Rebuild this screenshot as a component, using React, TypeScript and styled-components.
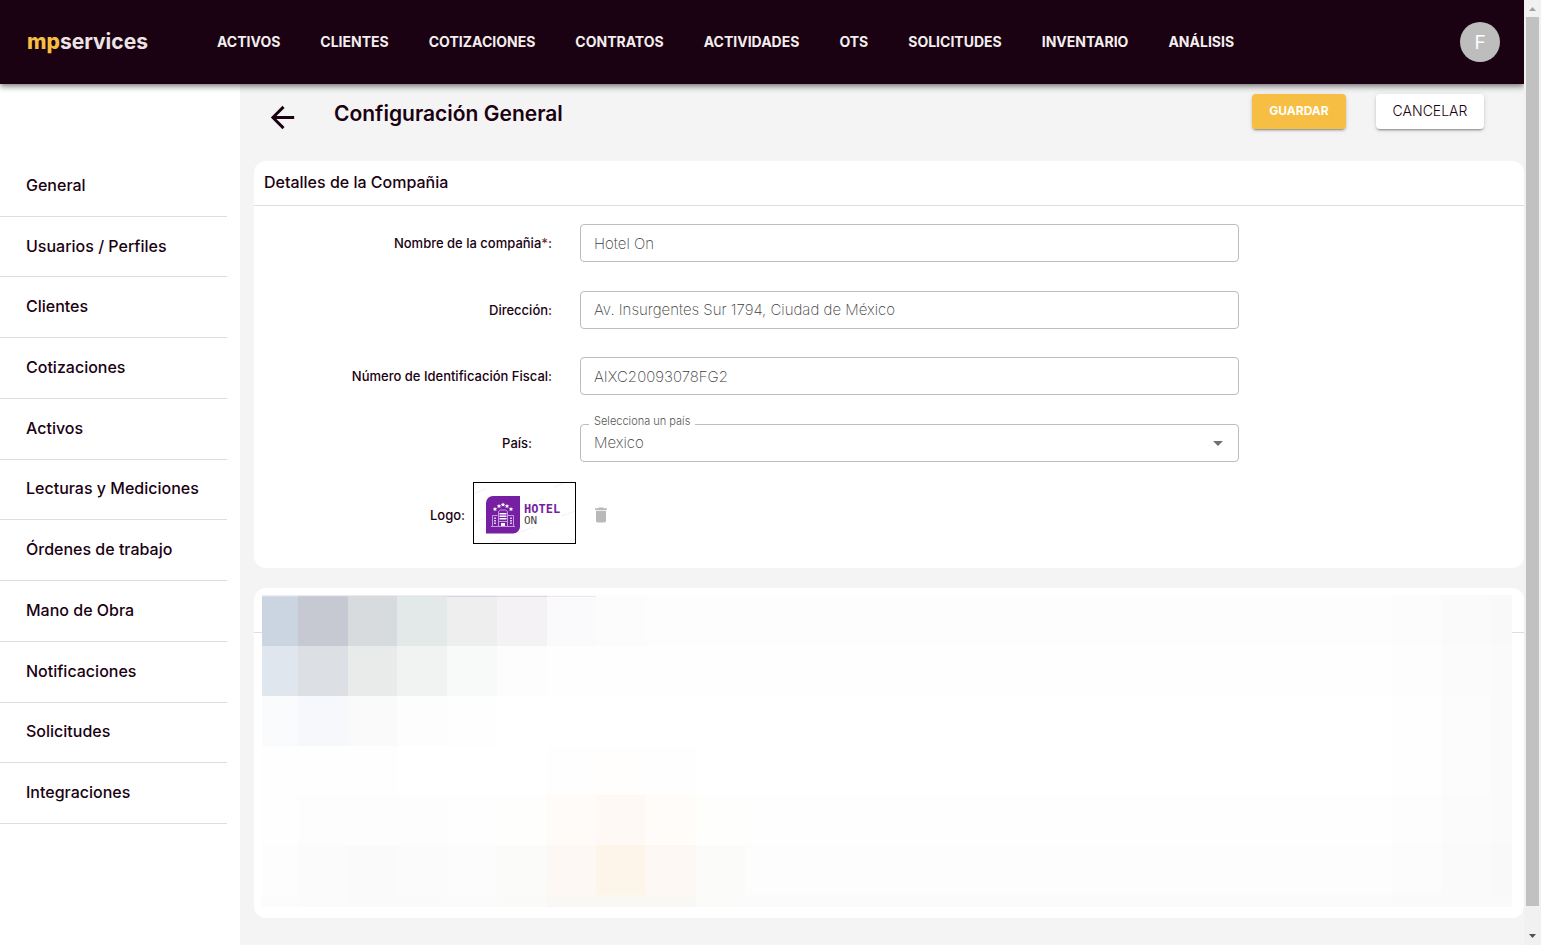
import React from "react";
import styled, { createGlobalStyle } from "styled-components";

const ink = "#1a0212";

const GlobalStyle = createGlobalStyle`
  * { box-sizing: border-box; }
  body {
    margin: 0;
    background: #f4f4f4;
    color: ${ink};
    font-family: Inter, "Noto Sans", sans-serif;
    font-size: 15px;
  }
  button, input, select { font-family: inherit; }
`;

const Frame = styled.div`
  display: grid;
  grid-template-columns: minmax(0, 1fr) 17px;
  min-height: 100vh;
`;

const Page = styled.div`
  display: flex;
  flex-direction: column;
  overflow: hidden;
`;

const Header = styled.header`
  position: relative;
  z-index: 2;
  display: flex;
  align-items: center;
  height: 84px;
  padding: 0 24px 0 27px;
  background: ${ink};
  box-shadow: 0 2px 4px -1px rgba(0, 0, 0, 0.3), 0 4px 5px rgba(0, 0, 0, 0.2),
    0 1px 10px rgba(0, 0, 0, 0.14);
`;

const Brand = styled.a`
  width: 190px;
  padding-bottom: 2px;
  color: #ece4e4;
  font-size: 21px;
  font-weight: 700;
  text-decoration: none;
`;

const BrandAccent = styled.span`
  color: #f6be42;
  font-weight: 800;
`;

const Nav = styled.nav`
  display: flex;
  flex: 1;
  gap: 40px;
  padding-bottom: 2px;
`;

const NavLink = styled.a`
  color: #f4eeee;
  font-size: 14px;
  font-weight: 700;
  text-decoration: none;
`;

const Avatar = styled.button`
  width: 40px;
  height: 40px;
  padding: 0;
  border: 0;
  border-radius: 50%;
  background: #bdbdbd;
  color: #fff;
  font-size: 19px;
`;

const Body = styled.div`
  display: flex;
  flex: 1;
`;

const Sidebar = styled.aside`
  flex: 0 0 240px;
  padding: 72px 13px 0 0;
  background: #fff;
`;

const Menu = styled.ul`
  display: grid;
  grid-auto-rows: 1fr;
  height: 668px;
  margin: 0;
  padding: 0;
  list-style: none;
`;

const MenuItem = styled.li`
  display: flex;
  align-items: center;
  padding-bottom: 2px;
  border-bottom: 1px solid #dedede;
`;

const MenuLink = styled.a`
  padding-left: 26px;
  color: ${ink};
  font-size: 16px;
  font-weight: 500;
  text-decoration: none;
`;

const Main = styled.main`
  flex: 1;
  min-width: 0;
  padding: 0 0 27px 14px;
`;

const TitleBar = styled.div`
  display: flex;
  align-items: flex-start;
  height: 77px;
  padding: 10px 40px 0 11px;
`;

const IconButton = styled.button`
  display: flex;
  padding: 0;
  border: 0;
  background: none;
  color: inherit;
`;

const BackButton = styled(IconButton)`
  padding-top: 6px;
`;

const Title = styled.h1`
  flex: 1;
  margin: 0 0 0 34px;
  font-size: 21px;
  font-weight: 600;
  line-height: 40px;
`;

const Action = styled.button<{ $primary?: boolean }>`
  width: ${(p) => (p.$primary ? 94 : 108)}px;
  height: 35px;
  margin-left: 30px;
  padding: 0 0 2px;
  border: 0;
  border-radius: 4px;
  background: ${(p) => (p.$primary ? "#f6be42" : "#fff")};
  color: ${(p) => (p.$primary ? "#fff" : ink)};
  font-size: ${(p) => (p.$primary ? 12 : 14)}px;
  font-weight: ${(p) => (p.$primary ? 700 : 300)};
  box-shadow: 0 3px 1px -2px rgba(0, 0, 0, 0.2), 0 2px 2px rgba(0, 0, 0, 0.14),
    0 1px 5px rgba(0, 0, 0, 0.12);
`;

const Card = styled.section`
  position: relative;
  border-radius: 12px;
  background: #fff;
  & + & {
    height: 330px;
    margin-top: 20px;
  }
`;

const CardHeader = styled.h2`
  height: 45px;
  margin: 0;
  padding: 0 10px;
  border-bottom: 1px solid #dedede;
  font-size: 16px;
  font-weight: 500;
  line-height: 42px;
`;

const Fields = styled.div`
  display: grid;
  grid-auto-rows: 1fr;
  height: 266px;
  margin-top: 18px;
`;

const Row = styled.div`
  display: grid;
  grid-template-columns: 298fr 659fr 257fr;
  column-gap: 28px;
  align-items: start;
`;

const FieldLabel = styled.label<{ $inset?: boolean }>`
  padding-right: ${(p) => (p.$inset ? 20 : 0)}px;
  font-size: 13px;
  font-weight: 500;
  line-height: 38px;
  text-align: right;
`;

const Required = styled.span`
  color: #7a2a2a;
`;

const control = `
  width: 100%;
  height: 38px;
  padding: 0 13px;
  border: 1px solid #bdbdbd;
  border-radius: 4px;
  background: #fff;
  color: #3d3d3d;
  font-size: 15px;
  font-weight: 200;
`;

const TextInput = styled.input`
  ${control}
`;

const SelectBox = styled.div`
  position: relative;
`;

const Select = styled.select`
  ${control}
  display: block;
  appearance: none;
`;

const FloatingLabel = styled.label`
  position: absolute;
  top: -10px;
  left: 9px;
  padding: 0 5px;
  background: #fff;
  color: #555;
  font-size: 11px;
  font-weight: 300;
  line-height: 14px;
`;

const Caret = styled.svg`
  position: absolute;
  top: 17px;
  right: 16px;
  pointer-events: none;
`;

const LogoRow = styled.div`
  display: flex;
  align-items: flex-end;
  padding: 0 0 24px 176px;
  margin-top: -8px;
`;

const LogoCaption = styled.span`
  font-size: 13px;
  font-weight: 500;
  line-height: 58px;
`;

const DeleteButton = styled(IconButton)`
  align-items: center;
  height: 58px;
`;

const LogoFrame = styled.div`
  width: 103px;
  height: 62px;
  margin: 0 15px 0 8px;
  border: 1px solid #000;
  background: #fff;
`;

const Mosaic = styled.div`
  position: absolute;
  inset: 7px 12px 11px 8px;
  display: grid;
  grid-template-columns: 36px repeat(24, 1fr) 21px;
  grid-template-rows: 1px 1px 49fr repeat(5, 50fr) 12px;
`;

const Tile = styled.div<{ $tone: string }>`
  background: ${(p) => p.$tone};
`;

const ScrollTrack = styled.div`
  position: sticky;
  top: 0;
  display: flex;
  flex-direction: column;
  align-items: center;
  height: 100vh;
  background: #f1f1f1;
`;

const ScrollThumb = styled.div`
  flex: 1;
  width: 13px;
  margin-bottom: 22px;
  background: #c1c1c1;
`;

const ScrollArrow = styled.svg`
  display: block;
  flex: none;
`;

const sections = ["ACTIVOS", "CLIENTES", "COTIZACIONES", "CONTRATOS", "ACTIVIDADES", "OTS", "SOLICITUDES", "INVENTARIO", "ANÁLISIS"];

const settings = ["General", "Usuarios / Perfiles", "Clientes", "Cotizaciones", "Activos", "Lecturas y Mediciones", "Órdenes de trabajo", "Mano de Obra", "Notificaciones", "Solicitudes", "Integraciones"];

/* Each row: leading tones, the tone that fills the middle, then the last three. */
const mosaicRows: { lead: string[]; fill: string; tail: string[] }[] = [
  { lead: ["#e9eef3", "#e8e9ee", "#e9ebee", "#eef0f1", "#f2f0f4", "#f7f4f8", "#fbf9fc"], fill: "#fdfdfd", tail: ["#fcfcfc", "#fafafa", "#f9f9f9"] },
  { lead: ["#d5dfe9", "#cdd0d8", "#d7dbdd", "#dfe3e6", "#ddd2ea", "#e2d4e9", "#f1e7f4"], fill: "#fdfdfd", tail: ["#fcfcfc", "#fafafa", "#f9f9f9"] },
  { lead: ["#cbd5e1", "#c6c9d2", "#d7dbdd", "#e3e8e8", "#eeeeef", "#f5f2f6", "#fafafc", "#fcfcfc"], fill: "#fdfdfd", tail: ["#fcfcfc", "#fafafa", "#f9f9f9"] },
  { lead: ["#dfe6ee", "#dcdfe4", "#e8ebe9", "#f1f3f3", "#f7faf9", "#fdfdfe"], fill: "#fefefe", tail: ["#fdfdfd", "#fbfbfb", "#fafafa"] },
  { lead: ["#fafbfd", "#f7f8fb", "#fafafa", "#fdfdfd", "#fefefe"], fill: "#ffffff", tail: ["#fefefe", "#fcfcfc", "#fafafa"] },
  { lead: ["#fefefe", "#fefefe", "#fefefe", "#ffffff", "#ffffff", "#ffffff", "#fefefe", "#fffefd", "#fefefe"], fill: "#ffffff", tail: ["#fefefe", "#fcfcfc", "#fafafa"] },
  { lead: ["#fefefe", "#fdfdfd", "#fdfdfd", "#fdfdfd", "#fefefe", "#fefefc", "#fffbf8", "#fef9f5", "#fffcf9", "#fefefd"], fill: "#fefefe", tail: ["#fdfdfd", "#fbfbfb", "#fafafa"] },
  { lead: ["#fdfdfd", "#fbfbfb", "#fafafa", "#fbfbfb", "#fcfcfc", "#fbfbf9", "#fdf8f4", "#fdf4ea", "#fdf8f4", "#fbfbf9"], fill: "#fdfdfd", tail: ["#fcfcfc", "#fafafa", "#f9f9f9"] },
  { lead: ["#fcfcfc", "#fbfbfb", "#fafafa", "#fafafa", "#fbfbfb", "#fafaf8", "#faf8f4", "#faf8f3", "#faf8f4", "#fbfbf9"], fill: "#fbfbfb", tail: ["#fafafa", "#fafafa", "#fafafa"] },
];

const COLUMNS = 26;

const tones = mosaicRows.flatMap(({ lead, fill, tail }) => [
  ...lead,
  ...Array<string>(COLUMNS - lead.length - tail.length).fill(fill),
  ...tail,
]);

function HotelLogo() {
  const marks = [[-4, 12], [53, 22], [80, 4], [-2, 40], [88, 33], [44, 50], [12, 62], [96, 58]];
  return (
    <svg width="101" height="60" viewBox="0 0 101 60" role="img" aria-label="Hotel On">
      <g stroke="#ececec" strokeWidth="1">
        {marks.map(([x, y]) => (
          <path key={`${x}-${y}`} d={`M${x} ${y}l16 -6`} strokeDasharray="2 1" />
        ))}
      </g>
      <path d="M19 13H46V43a7 7 0 0 1-7 7.500H12V20a7 7 0 0 1 7-7z" fill="#761fa3" />
      <g fill="#fff">
        {[[21, 26], [25, 23], [29, 21.5], [33, 23], [37, 26]].map(([x, y]) => (
          <path key={x} d={`M${x} ${y - 2}l.7 1.300 1.500.2-1.100 1 .3 1.500-1.400-.7-1.400.7.3-1.500-1.100-1 1.500-.2z`} />
        ))}
        <path d="M25.500 30h7v1.500h-7zM25.500 32.500h7v1.500h-7zM25.500 35h7v1.500h-7zM27 40h4v3.500h-4z" />
      </g>
      <g fill="none" stroke="#c79add" strokeWidth="1">
        <path d="M24.500 43V28.500l2-1.500h5l2 1.500V43M18.500 43V32.500h5M34 32.500h5.500V43M17 43.500h24M24 38.500h10" />
        <path d="M21 34.500v7M37 34.500v7" stroke="#fff" strokeWidth="1.5" strokeDasharray="1.5 1" />
      </g>
      <text x="50" y="30" fill="#761fa3" fontFamily="DejaVu Sans Mono" fontSize="12" fontWeight="700">HOTEL</text>
      <text x="50" y="41" fill="#444" fontFamily="DejaVu Sans Mono" fontSize="11">ON</text>
    </svg>
  );
}

export default function App() {
  return (
    <>
      <GlobalStyle />
      <Frame>
        <Page>
          <Header>
            <Brand href="#inicio"><BrandAccent>mp</BrandAccent>services</Brand>
            <Nav>
              {sections.map((name) => (
                <NavLink key={name} href="#seccion">{name}</NavLink>
              ))}
            </Nav>
            <Avatar type="button">F</Avatar>
          </Header>
          <Body>
            <Sidebar>
              <Menu>
                {settings.map((name) => (
                  <MenuItem key={name}><MenuLink href="#ajuste">{name}</MenuLink></MenuItem>
                ))}
              </Menu>
            </Sidebar>
            <Main>
              <TitleBar>
                <BackButton type="button" aria-label="Volver">
                  <svg width="35" height="35" viewBox="0 0 24 24" fill="currentColor">
                    <path d="M20 11H7.830l5.590-5.590L12 4l-8 8 8 8 1.410-1.410L7.830 13H20v-2z" />
                  </svg>
                </BackButton>
                <Title>Configuración General</Title>
                <Action type="button" $primary>GUARDAR</Action>
                <Action type="button">CANCELAR</Action>
              </TitleBar>
              <Card>
                <CardHeader>Detalles de la Compañia</CardHeader>
                <Fields>
                  <Row>
                    <FieldLabel htmlFor="nombre">Nombre de la compañia<Required>*</Required>:</FieldLabel>
                    <TextInput id="nombre" defaultValue="Hotel On" />
                  </Row>
                  <Row>
                    <FieldLabel htmlFor="direccion">Dirección:</FieldLabel>
                    <TextInput id="direccion" defaultValue="Av. Insurgentes Sur 1794, Ciudad de México" />
                  </Row>
                  <Row>
                    <FieldLabel htmlFor="fiscal">Número de Identificación Fiscal:</FieldLabel>
                    <TextInput id="fiscal" defaultValue="AIXC20093078FG2" />
                  </Row>
                  <Row>
                    <FieldLabel htmlFor="pais" $inset>País:</FieldLabel>
                    <SelectBox>
                      <Select id="pais" defaultValue="Mexico"><option>Mexico</option></Select>
                      <FloatingLabel htmlFor="pais">Selecciona un país</FloatingLabel>
                      <Caret width="10" height="5" viewBox="0 0 10 5"><path d="M0 0h10L5 5z" fill="#707070" /></Caret>
                    </SelectBox>
                  </Row>
                </Fields>
                <LogoRow>
                  <LogoCaption>Logo:</LogoCaption>
                  <LogoFrame><HotelLogo /></LogoFrame>
                  <DeleteButton type="button" aria-label="Eliminar logo">
                    <svg width="20" height="20" viewBox="0 0 24 24" fill="#b9b9b9">
                      <path d="M6 19c0 1.100.9 2 2 2h8c1.100 0 2-.9 2-2V7H6v12zM19 4h-3.500l-1-1h-5l-1 1H5v2h14V4z" />
                    </svg>
                  </DeleteButton>
                </LogoRow>
              </Card>
              <Card>
                <CardHeader as="div" />
                <Mosaic>
                  {tones.map((tone, i) => <Tile key={i} $tone={tone} />)}
                </Mosaic>
              </Card>
            </Main>
          </Body>
        </Page>
        <ScrollTrack>
          <ScrollArrow width="17" height="17" viewBox="0 0 17 17"><path d="M5 11h7L8.500 7z" fill="#a3a3a3" /></ScrollArrow>
          <ScrollThumb />
          <ScrollArrow width="17" height="17" viewBox="0 0 17 17"><path d="M5 6h7l-3.500 4z" fill="#505050" /></ScrollArrow>
        </ScrollTrack>
      </Frame>
    </>
  );
}
